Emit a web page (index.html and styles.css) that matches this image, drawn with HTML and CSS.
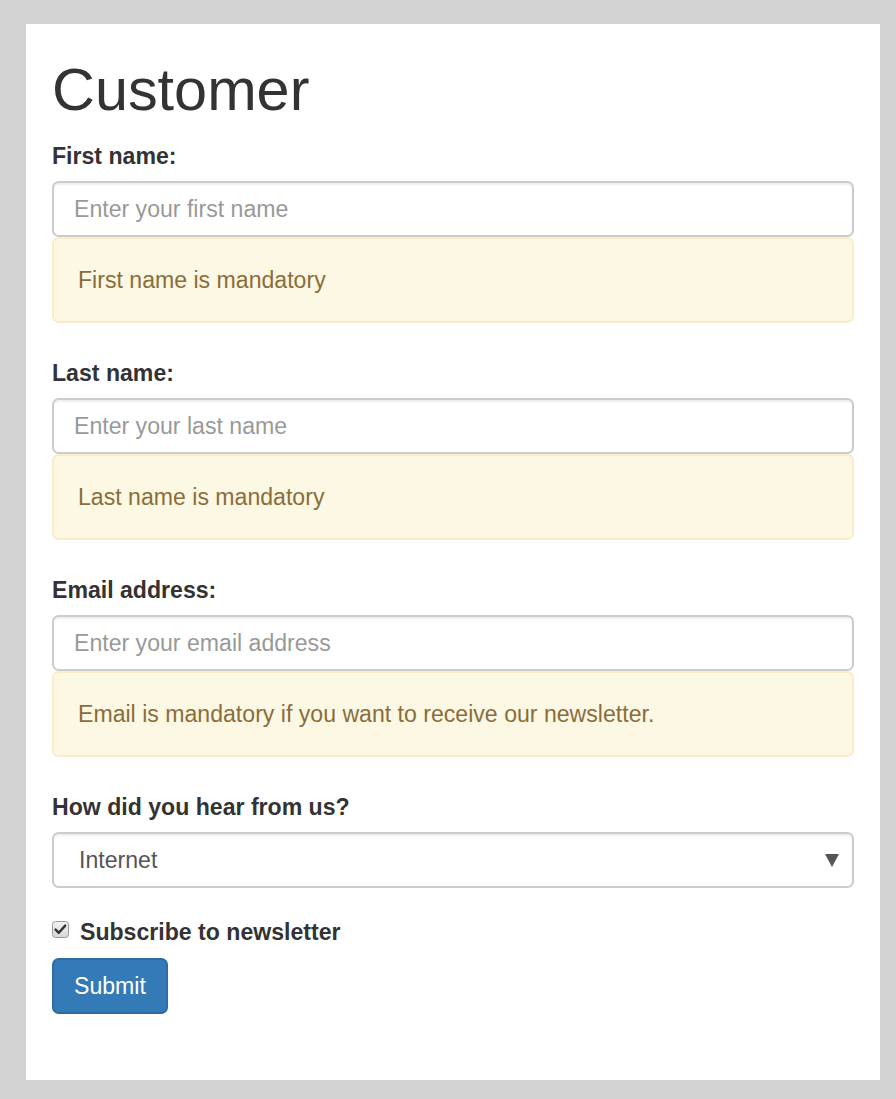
FILE: index.html
```html
<!DOCTYPE html>
<html lang="en">
<head>
<meta charset="utf-8">
<title>Customer</title>
<link rel="stylesheet" href="styles.css">
</head>
<body>
<div class="container">
  <h1 class="title">Customer</h1>
  <form class="form">
    <div class="group">
      <label class="label" for="first">First name:</label>
      <input class="control" id="first" type="text" placeholder="Enter your first name">
      <div class="alert">First name is mandatory</div>
    </div>
    <div class="group">
      <label class="label" for="last">Last name:</label>
      <input class="control" id="last" type="text" placeholder="Enter your last name">
      <div class="alert">Last name is mandatory</div>
    </div>
    <div class="group">
      <label class="label" for="email">Email address:</label>
      <input class="control" id="email" type="email" placeholder="Enter your email address">
      <div class="alert">Email is mandatory if you want to receive our newsletter.</div>
    </div>
    <div class="group group-select">
      <label class="label" for="source">How did you hear from us?</label>
      <div class="select-wrap">
        <select class="control select" id="source">
          <option>Internet</option>
          <option>Friend</option>
          <option>Other</option>
        </select>
        <svg class="select-arrow" width="14" height="14" viewBox="0 0 14 14" aria-hidden="true"><polygon points="0,1 14,1 7,14" fill="#555"/></svg>
      </div>
    </div>
    <label class="check">
      <svg class="check-box" width="17" height="17" viewBox="0 0 17 17" aria-hidden="true">
        <defs>
          <linearGradient id="cbg" x1="0" y1="0" x2="0" y2="1">
            <stop offset="0" stop-color="#f2f2f2"/>
            <stop offset="1" stop-color="#d6d6d6"/>
          </linearGradient>
        </defs>
        <rect x="0.5" y="0.5" width="16" height="16" rx="3" fill="url(#cbg)" stroke="#9a9a9a"/>
        <path d="M3.6 8.6 L6.8 11.8 L13.2 4.6" fill="none" stroke="#333" stroke-width="2.4" stroke-linecap="round" stroke-linejoin="round"/>
      </svg>
      <span>Subscribe to newsletter</span>
    </label>
    <button class="btn" type="button">Submit</button>
  </form>
</div>
</body>
</html>
```
FILE: styles.css
```css
html, body {
  margin: 0;
  padding: 0;
}

body {
  background: #d3d3d3;
  padding: 24px 16px 19px 26px;
  font-family: "Liberation Sans", Arial, Helvetica, sans-serif;
  font-size: 23.1px;
  line-height: 33px;
  color: #333;
}

.container {
  box-sizing: border-box;
  width: 854px;
  background: #fff;
  padding: 33px 26px 66px;
}

.title {
  margin: 0 0 17px;
  font-size: 59.4px;
  line-height: 66px;
  font-weight: 500;
  color: #333;
}

.form {
  margin: 0;
}

.group {
  display: flex;
  flex-direction: column;
  margin-bottom: 34px;
}

.group-select {
  margin-bottom: 28px;
}

.label {
  display: block;
  font-weight: bold;
  line-height: 33px;
  margin-bottom: 8px;
}

.control {
  box-sizing: border-box;
  display: block;
  width: 100%;
  height: 56px;
  margin: 0;
  padding: 0 20px;
  font-family: inherit;
  font-size: 23.1px;
  color: #555;
  background: #fff;
  border: 2px solid #cccccc;
  border-radius: 6.6px;
  box-shadow: inset 0 1.65px 1.65px rgba(0, 0, 0, 0.075);
  outline: none;
}

.control::placeholder {
  color: #999;
  opacity: 1;
}

.alert {
  box-sizing: border-box;
  padding: 25px 24px;
  line-height: 32px;
  color: #8a6d3b;
  background: #fcf8e3;
  border: 2px solid #faebcc;
  border-radius: 6.6px;
}

.select-wrap {
  position: relative;
}

.select {
  appearance: none;
  -webkit-appearance: none;
  padding-left: 25px;
}

.select-arrow {
  position: absolute;
  right: 15px;
  top: 21px;
}

.check {
  display: flex;
  align-items: center;
  gap: 11px;
  height: 33px;
  margin: 0 0 9px;
  font-weight: bold;
}

.check-box {
  flex: none;
  margin-top: -6px;
}

.btn {
  box-sizing: border-box;
  display: block;
  height: 56px;
  padding: 0 20px;
  font-family: inherit;
  font-size: 23.1px;
  color: #fff;
  background: #337ab7;
  border: 2px solid #2e6da4;
  border-radius: 6.6px;
}
```
